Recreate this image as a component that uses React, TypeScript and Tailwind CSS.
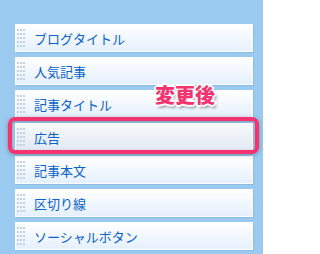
import React from "react";

const items = ["ブログタイトル", "人気記事", "記事タイトル", "広告", "記事本文", "区切り線", "ソーシャルボタン"];

function Grip() {
  const dots: React.ReactElement[] = [];
  for (let r = 0; r < 5; r++) {
    for (let c = 0; c < 3; c++) {
      dots.push(<rect key={`${r}-${c}`} x={c * 3} y={r * 4} width={2} height={2} fill="#c3d0e0" />);
    }
  }
  return (
    <svg width="8" height="18" viewBox="0 0 8 18" className="shrink-0">
      {dots}
    </svg>
  );
}

export default function App() {
  return (
    <div
      className="relative w-[263px] h-[254px] overflow-hidden bg-[#9acaef]"
      style={{ fontFamily: '"Noto Sans CJK JP", "Noto Sans", sans-serif' }}
    >
      <div className="flex flex-col gap-[5px] pt-[24px] pl-[15px]">
        {items.map((t, i) => (
          <div
            key={t}
            className={`flex items-center w-[238px] h-[28px] border border-white shadow-[1px_1px_0_#8ebde4] ${
              i === 3 ? "bg-gradient-to-b from-[#f7f9fb] to-[#e2e9f2]" : "bg-gradient-to-b from-white to-[#e5f0fd]"
            }`}
          >
            <div className="pl-[1px]">
              <Grip />
            </div>
            <span className="pl-[9px] text-[13px] leading-none text-[#0c62c9]">{t}</span>
          </div>
        ))}
      </div>
      <div className="absolute left-[8px] top-[117px] w-[251px] h-[37px] rounded-[7px] border-[4px] border-[#f5336f] shadow-[0_1px_4px_rgba(0,0,0,0.3),inset_0_1px_3px_rgba(0,0,0,0.25)]" />
      <div className="absolute left-[155px] top-[85px] text-[20px] font-black leading-none text-[#f23370] [text-shadow:1px_0_0_#fff,-1px_0_0_#fff,0_1px_0_#fff,0_-1px_0_#fff,1px_1px_0_#fff,-1px_-1px_0_#fff,1px_-1px_0_#fff,-1px_1px_0_#fff,2px_0_0_#fff,-2px_0_0_#fff,0_2px_0_#fff,0_-2px_0_#fff,2px_3px_3px_rgba(0,0,0,0.45)]">
        変更後
      </div>
    </div>
  );
}
